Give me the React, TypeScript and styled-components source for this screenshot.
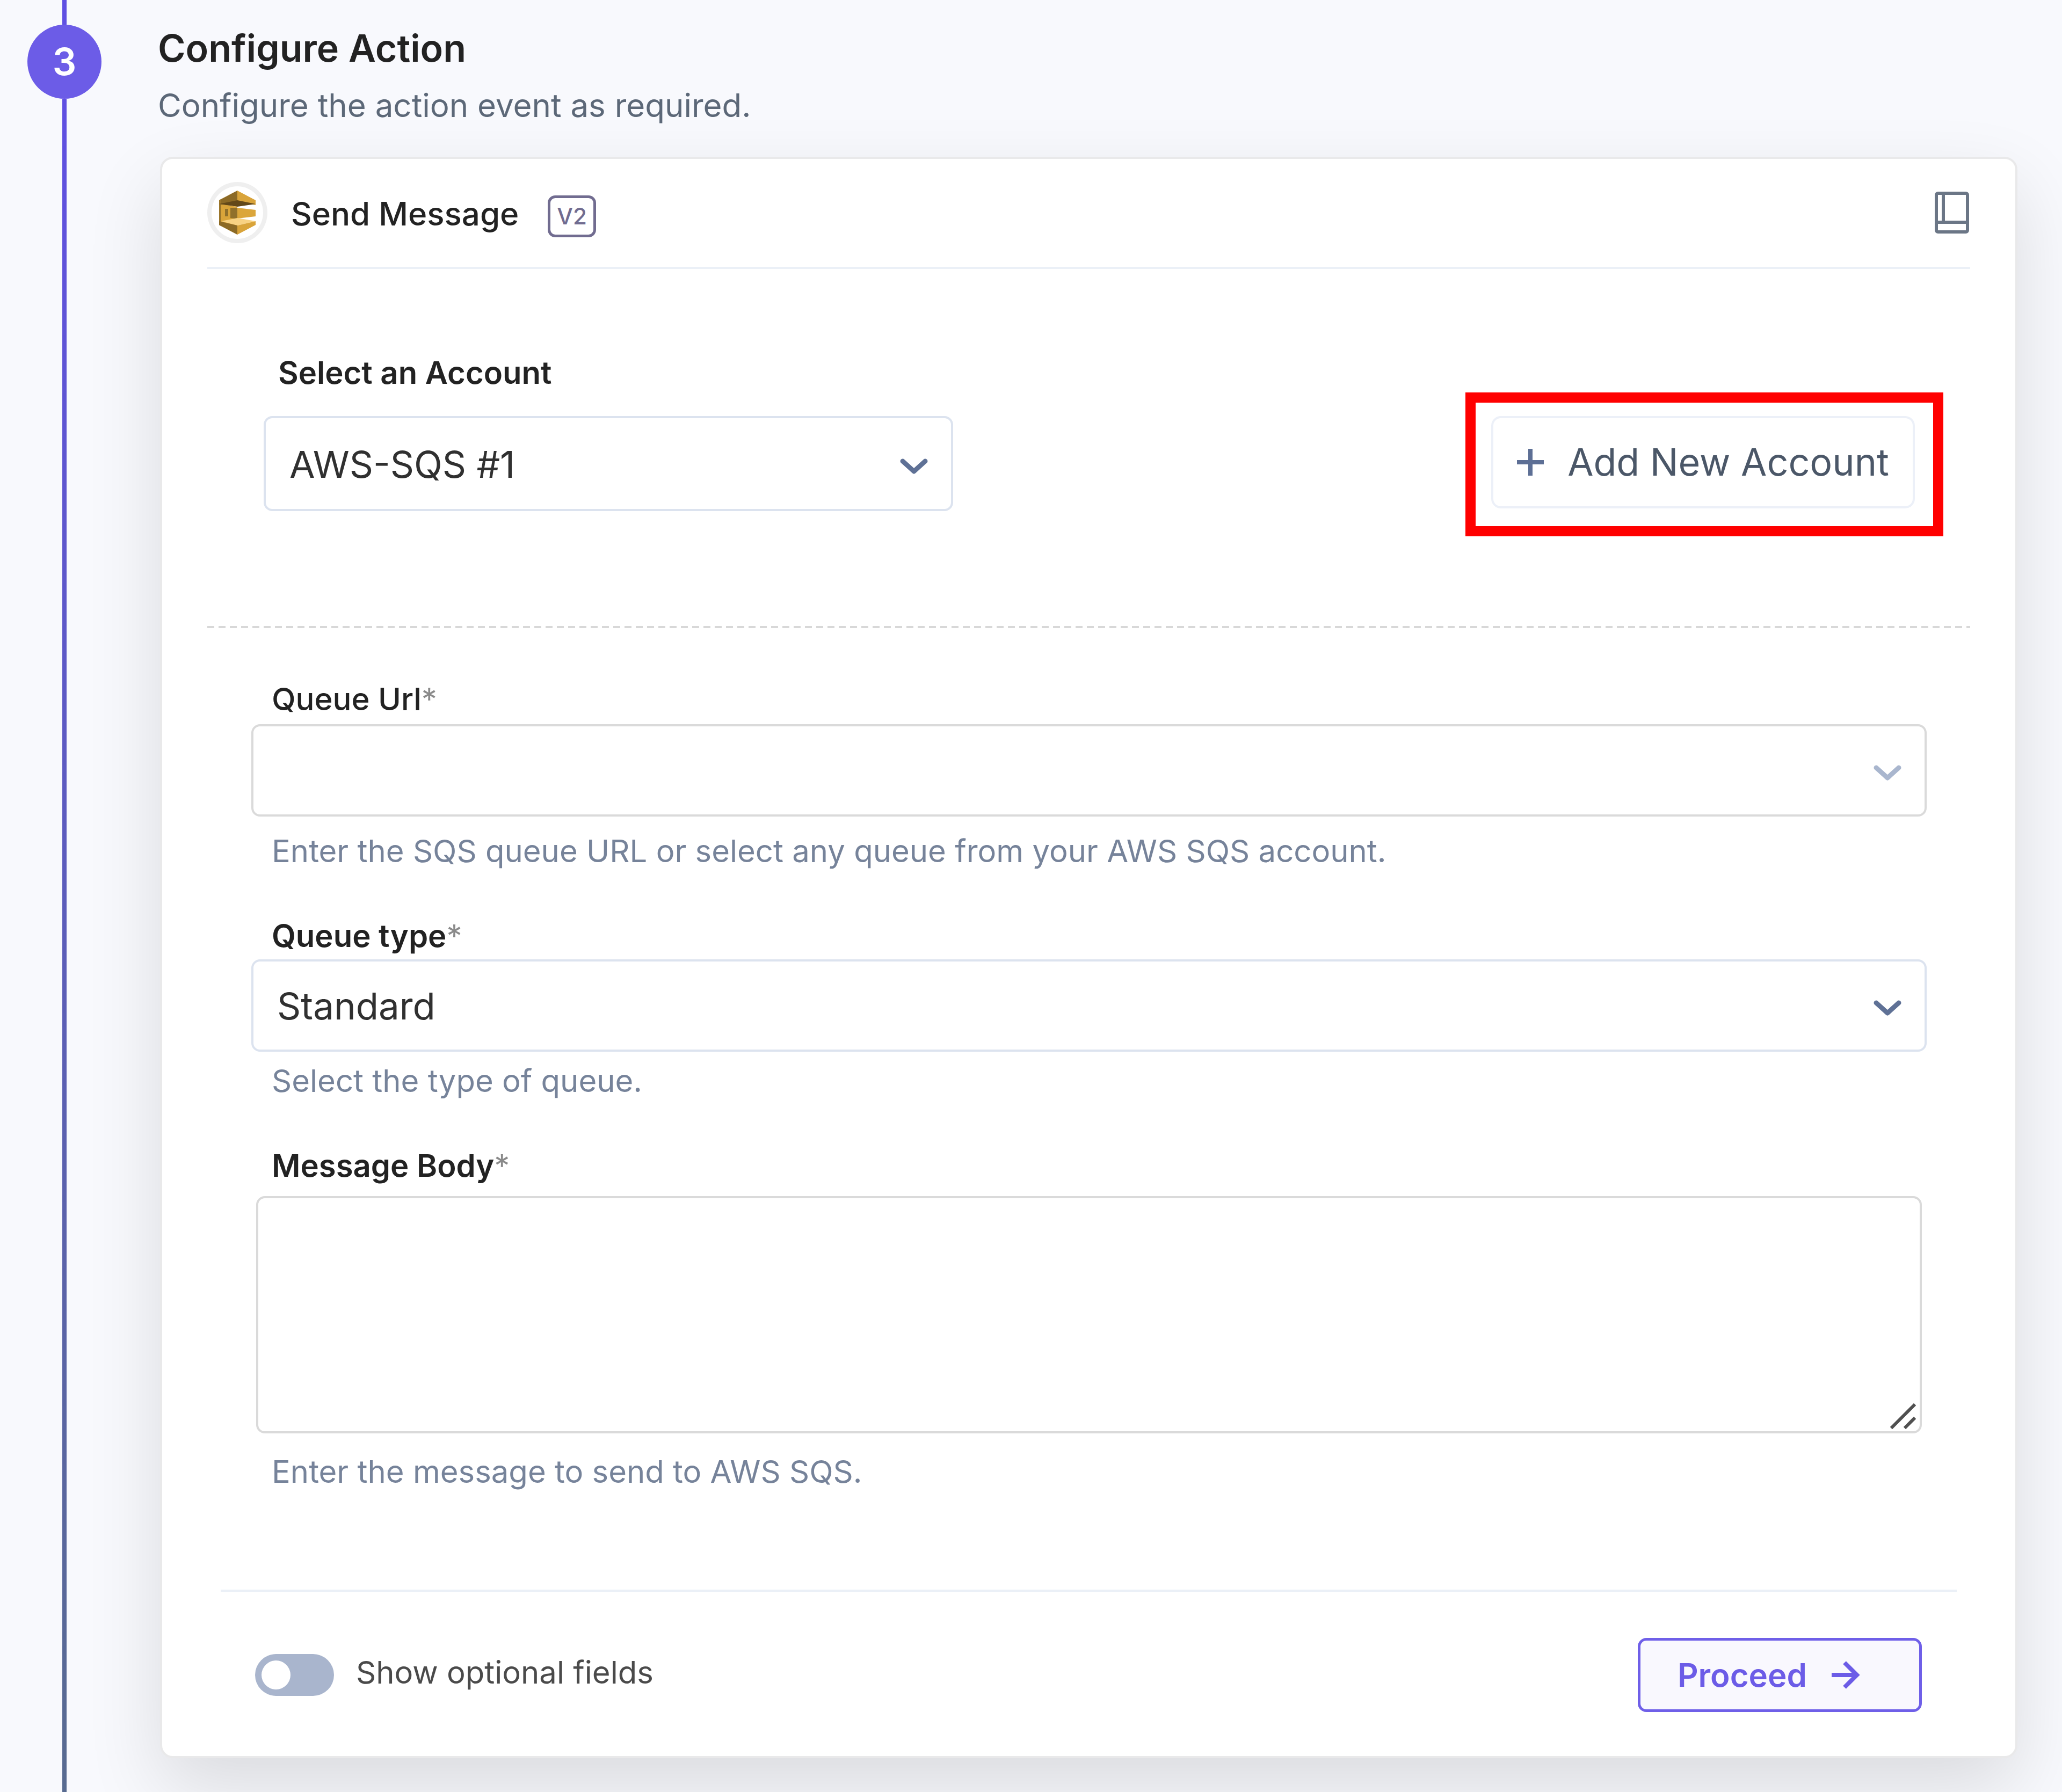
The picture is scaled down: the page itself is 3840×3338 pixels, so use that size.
import { ReactNode } from "react";
import styled, { createGlobalStyle } from "styled-components";

const GlobalStyle = createGlobalStyle`

    *{

        box-sizing: border-box;
    }

    body{

        margin: 0;
        background: #f8f9fd;
        color: #222222;

        font-family: Inter, "Liberation Sans", sans-serif;
        font-optical-sizing: none;
    }

    button, select, textarea{

        font-family: inherit;
        font-optical-sizing: inherit;
    }

    svg{

        display: block;
        flex: none;
    }
`

const StyledStep = styled.main`

    display: flex;
    min-height: 100vh;
`

const StyledRail = styled.div`

    display: flex;
    flex-direction: column;
    align-items: center;
    flex: none;

    width: 240px;
`

const StyledLine = styled.div<{ $grow?: boolean }>`

    width: 8px;
    height: 46px;
    flex: ${({ $grow }) => ($grow ? "1" : "none")};

    background: ${({ $grow }) => ($grow ? "linear-gradient(#6050e2, #586b90)" : "#6050e2")};
`

const StyledNumber = styled.div`

    display: flex;
    align-items: center;
    justify-content: center;

    width: 138px;
    height: 138px;
    border-radius: 50%;

    background: #6c5ce7;
    color: #ffffff;

    font-size: 70px;
    line-height: 84px;
    font-weight: 600;
`

const StyledContent = styled.div`

    flex: 1;
    min-width: 0;
    padding: 48px 83px 62px 54px;
`

const StyledTitle = styled.h1`

    margin: 0 0 28px;

    font-size: 70px;
    line-height: 84px;
    font-weight: 600;
`

const StyledSubtitle = styled.p`

    margin: 0 0 60px;

    color: #5c6878;
    font-size: 60px;
    line-height: 72px;
`

const StyledCard = styled.section`

    margin-left: 4px;
    padding: 0 84px;
    border: 4px solid #e9e9ea;
    border-radius: 24px;

    background: #ffffff;
    box-shadow: 0 56px 140px rgba(0, 0, 0, 0.12);
`

const StyledCardHeader = styled.header`

    display: flex;
    align-items: center;

    padding: 43px 0 44px;
    border-bottom: 4px solid #ebf0f7;

    h2{

        margin: 4px 54px 0 44px;

        font-size: 60px;
        line-height: 72px;
        font-weight: 500;
    }
`

const StyledLogo = styled.div`

    display: flex;
    align-items: center;
    justify-content: center;

    width: 112px;
    height: 114px;
    border: 8px solid #efefef;
    border-radius: 50%;
`

const StyledVersion = styled.span`

    margin-top: 14px;
    padding: 10px 12px;
    border: 5px solid #716c90;
    border-radius: 14px;

    color: #716c90;
    font-size: 42px;
    line-height: 48px;
    font-weight: 500;
`

const StyledDocs = styled.button`

    margin-left: auto;
    padding: 0;
    border: none;

    background: none;
    color: #6b7686;
    cursor: pointer;
`

const StyledAccount = styled.div`

    display: flex;
    justify-content: space-between;
    align-items: flex-start;

    padding: 157px 50px 171px 105px;

    background: repeating-linear-gradient(90deg, #d8d8d8 0 13px, transparent 13px 21px) bottom / 100% 4px no-repeat;
`

const StyledHighlight = styled.div`

    margin-top: 73px;
    padding: 25px 34px 33px 29px;
    border: 19px solid #ff0000;
`

const StyledAddButton = styled.button`

    display: flex;
    align-items: center;
    gap: 44px;

    height: 172px;
    padding: 0 44px;
    border: 4px solid #ecf0f8;
    border-radius: 18px;

    background: #ffffff;
    color: #4b5768;
    cursor: pointer;

    font-size: 70px;
    line-height: 84px;
`

const StyledForm = styled.div`

    display: flex;
    flex-direction: column;
    gap: 86px;

    padding: 96px 81px 184px 82px;
`

const StyledField = styled.div<{ $labelGap: number, $helpGap?: number }>`

    display: flex;
    flex-direction: column;

    p{

        margin: ${({ $helpGap }) => $helpGap}px 0 0 38px;

        color: #76839a;
        font-size: 58px;
        line-height: 72px;
    }

    label{

        margin-bottom: ${({ $labelGap }) => $labelGap}px;
    }
`

const StyledLabel = styled.label<{ $indent: number, $weight: number }>`

    padding-left: ${({ $indent }) => $indent}px;

    font-size: 58px;
    line-height: 72px;
    font-weight: ${({ $weight }) => $weight};

    span{

        color: #8a8a8a;
        font-weight: 400;
    }
`

const StyledSelectBox = styled.div<{ $soft?: boolean }>`

    position: relative;

    svg{

        position: absolute;
        right: 47px;
        top: calc(50% - 10px);

        color: ${({ $soft }) => ($soft ? "#a9b6ce" : "#5f7196")};
        pointer-events: none;
    }
`

const StyledSelect = styled.select<{ $grey?: boolean, $width?: string, $height: number }>`

    display: block;
    appearance: none;

    width: ${({ $width }) => $width ?? "100%"};
    height: ${({ $height }) => $height}px;
    padding: 2px 110px 0 44px;
    border: 4px solid ${({ $grey }) => ($grey ? "#dadada" : "#dce3ef")};
    border-radius: 16px;

    background: #ffffff;
    color: #303030;

    font-size: 69px;
    line-height: 84px;
`

const StyledTextBox = styled.div`

    position: relative;
    margin: 0 9px;

    svg{

        position: absolute;
        right: 11px;
        bottom: 8px;
        pointer-events: none;
    }
`

const StyledTextarea = styled.textarea`

    display: block;
    resize: none;

    width: 100%;
    height: 442px;
    padding: 32px;
    border: 4px solid #dadada;
    border-radius: 16px;

    background: #ffffff;
    font-size: 58px;
    line-height: 72px;
`

const StyledFooter = styled.footer`

    display: flex;
    align-items: center;
    justify-content: space-between;

    margin: 0 25px;
    padding: 86px 65px 82px 64px;
    border-top: 4px solid #ebf0f7;
`

const StyledToggle = styled.label`

    display: flex;
    align-items: center;
    gap: 41px;

    color: #4a4a4a;
    font-size: 58px;
    line-height: 72px;

    span{

        padding-bottom: 10px;
    }

    input{

        appearance: none;
        display: flex;
        align-items: center;

        width: 147px;
        height: 78px;
        margin: 0;
        padding: 0 12px;
        border-radius: 39px;

        background: #a9b5cd;
    }

    input::before{

        content: "";

        width: 54px;
        height: 54px;
        border-radius: 50%;

        background: #ffffff;
    }

    input:checked{

        justify-content: flex-end;
        background: #6c5ce7;
    }
`

const StyledProceed = styled.button`

    display: flex;
    align-items: center;
    gap: 46px;

    height: 138px;
    padding: 0 109px 0 69px;
    border: 5px solid #6f5fe8;
    border-radius: 16px;

    background: #f9f8fe;
    color: #6c5ce7;
    cursor: pointer;

    font-size: 60px;
    line-height: 72px;
    font-weight: 600;
`

function Chevron(){

    return(
        <svg width="52" height="30" viewBox="0 0 52 30" fill="none" stroke="currentColor" strokeWidth="9" strokeLinecap="round" strokeLinejoin="round">
            <path d="M5 5 26 24 47 5" />
        </svg>
    )
}

function SqsLogo(){

    return(
        <svg width="68" height="82" viewBox="0 0 68 82">
            <path d="M34 0 0 18v46l34 18V62L18 52V26l16-6z" fill="#d9a23a" />
            <path d="M34 0 0 18v9l34-7z" fill="#8c6a26" />
            <path d="M0 18v46l4 2V16z" fill="#9b762b" />
            <path d="M34 0v20l34 7V18z" fill="#d9a43a" />
            <path d="M0 25 34 18l34 7-34 5z" fill="#624819" />
            <path d="M4 26l30 4v24L4 58z" fill="#d9a43a" />
            <path d="M11 34h6v14h-6zM21 32h13v21l-13-2z" fill="#90702b" />
            <path d="M34 32l34 4v12l-34 4z" fill="#dba63b" />
            <path d="M4 57 34 51l34 6-34 8z" fill="#f8d283" />
            <path d="M0 57l34 8v17L0 64z" fill="#8c6a26" />
            <path d="M34 65l34-8v7L34 82z" fill="#d9a43a" />
        </svg>
    )
}

type FieldProps = {
    id: string
    label: string
    weight: number
    help: string
    labelGap: number
    helpGap: number
    children: ReactNode
}

function Field({ id, label, weight, help, labelGap, helpGap, children }: FieldProps){

    return(
        <StyledField $labelGap={labelGap} $helpGap={helpGap}>
            <StyledLabel htmlFor={id} $indent={38} $weight={weight}>{label}<span>*</span></StyledLabel>
            {children}
            <p>{help}</p>
        </StyledField>
    )
}

function App(){

    return(
        <>
            <GlobalStyle />
            <StyledStep>
                <StyledRail>
                    <StyledLine />
                    <StyledNumber>3</StyledNumber>
                    <StyledLine $grow />
                </StyledRail>

                <StyledContent>
                    <StyledTitle>Configure Action</StyledTitle>
                    <StyledSubtitle>Configure the action event as required.</StyledSubtitle>

                    <StyledCard>
                        <StyledCardHeader>
                            <StyledLogo><SqsLogo /></StyledLogo>
                            <h2>Send Message</h2>
                            <StyledVersion>V2</StyledVersion>
                            <StyledDocs aria-label="Documentation">
                                <svg width="68" height="78" viewBox="0 0 68 78" fill="none" stroke="currentColor" strokeWidth="6">
                                    <rect x="5" y="3" width="58" height="72" rx="3" />
                                    <path d="M18 3v54M5 57h58" />
                                </svg>
                            </StyledDocs>
                        </StyledCardHeader>

                        <StyledAccount>
                            <StyledField $labelGap={45}>
                                <StyledLabel htmlFor="account" $indent={27} $weight={600}>Select an Account</StyledLabel>
                                <StyledSelectBox>
                                    <StyledSelect id="account" $width="1284px" $height={177}>
                                        <option>AWS-SQS #1</option>
                                    </StyledSelect>
                                    <Chevron />
                                </StyledSelectBox>
                            </StyledField>

                            <StyledHighlight>
                                <StyledAddButton>
                                    <svg width="50" height="50" viewBox="0 0 50 50" stroke="#5d6f95" strokeWidth="8">
                                        <path d="M25 0v50M0 25h50" />
                                    </svg>
                                    Add New Account
                                </StyledAddButton>
                            </StyledHighlight>
                        </StyledAccount>

                        <StyledForm>
                            <Field id="queue-url" label="Queue Url" weight={500} labelGap={11} helpGap={28} help="Enter the SQS queue URL or select any queue from your AWS SQS account.">
                                <StyledSelectBox $soft>
                                    <StyledSelect id="queue-url" $grey $height={172}>
                                        <option></option>
                                    </StyledSelect>
                                    <Chevron />
                                </StyledSelectBox>
                            </Field>

                            <Field id="queue-type" label="Queue type" weight={600} labelGap={8} helpGap={18} help="Select the type of queue.">
                                <StyledSelectBox>
                                    <StyledSelect id="queue-type" $height={172}>
                                        <option>Standard</option>
                                        <option>FIFO</option>
                                    </StyledSelect>
                                    <Chevron />
                                </StyledSelectBox>
                            </Field>

                            <Field id="message" label="Message Body" weight={600} labelGap={21} helpGap={35} help="Enter the message to send to AWS SQS.">
                                <StyledTextBox>
                                    <StyledTextarea id="message" />
                                    <svg width="48" height="48" viewBox="0 0 48 48" stroke="#505050" strokeWidth="6" strokeLinecap="square">
                                        <path d="M4 44 44 4M29 44 44 29" />
                                    </svg>
                                </StyledTextBox>
                            </Field>
                        </StyledForm>

                        <StyledFooter>
                            <StyledToggle>
                                <input type="checkbox" role="switch" />
                                <span>Show optional fields</span>
                            </StyledToggle>

                            <StyledProceed>
                                Proceed
                                <svg width="54" height="52" viewBox="0 0 54 52" fill="none" stroke="currentColor" strokeWidth="8">
                                    <path d="M0 26h48M24 3l23 23-23 23" />
                                </svg>
                            </StyledProceed>
                        </StyledFooter>
                    </StyledCard>
                </StyledContent>
            </StyledStep>
        </>
    )
}

export default App
